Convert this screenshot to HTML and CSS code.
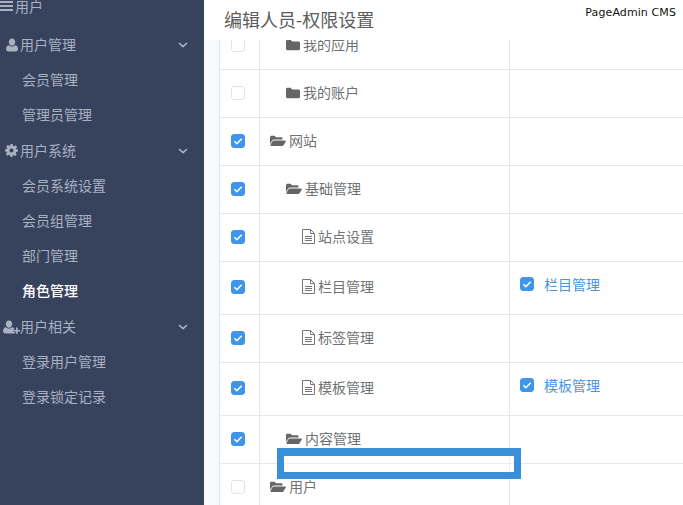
FILE: index.html
```html
<!DOCTYPE html>
<html lang="zh-CN">
<head>
<meta charset="utf-8">
<title>编辑人员-权限设置</title>
<link rel="stylesheet" href="styles.css">
</head>
<body>
<svg class="sprite" aria-hidden="true">
  <symbol id="i-folder" viewBox="0 0 14 12"><path d="M1.4 .8h3.4l1.3 1.6h6.5c.8 0 1.4.6 1.4 1.4v6c0 .8-.6 1.4-1.4 1.4H1.4C.6 11.2 0 10.6 0 9.8V2.2C0 1.4.6.8 1.4.8z"/></symbol>
  <symbol id="i-open" viewBox="0 0 16 12"><path d="M0 9V2.2C0 1.4.6.8 1.4.8h3.2l1.3 1.5h5.3c.8 0 1.3.5 1.3 1.3v.9H4.2c-.9 0-1.6.4-2.1 1.1z"/><path d="M3.5 5.4H15c.8 0 1.2.6.8 1.2l-2.3 3.6c-.4.6-1 .9-1.7.9H1.2C.4 11.1 0 10.5.4 9.9l2-3.6c.3-.6.6-.9 1.1-.9z"/></symbol>
  <symbol id="i-file" viewBox="0 0 13 15"><path class="ln" d="M.5.5h8l4 4v10H.5zM8.500.5v4h4M3 7.500h7M3 9.500h7M3 11.500h7"/></symbol>
  <symbol id="i-check" viewBox="0 0 14 14"><path class="ck" d="M3.4 7.2l2.5 2.5 4.8-5"/></symbol>
  <symbol id="i-user" viewBox="0 0 12 14"><path d="M6 .5c1.9 0 3.2 1.5 3.2 3.500S7.900 7.700 6 7.700 2.800 6 2.800 4 4.100.5 6 .5zM2.800 7.200C3.700 8.100 4.800 8.600 6 8.600s2.300-.5 3.200-1.400c1.700.2 2.800 1.600 2.800 3.900 0 1.600-1 2.400-2.300 2.400H2.300C1 13.500 0 12.700 0 11.100c0-2.300 1.100-3.700 2.800-3.900z"/></symbol>
  <symbol id="i-plus" viewBox="0 0 17 14"><path d="M6 .5c1.900 0 3.200 1.500 3.200 3.500S7.900 7.700 6 7.700 2.800 6 2.800 4 4.100.5 6 .5zM2.800 7.200C3.700 8.100 4.800 8.600 6 8.600s2.300-.5 3.200-1.400c1.300.2 2.200 1 2.600 2.300H10.500v2.400h1.600v1.600H2.300C1 13.500 0 12.700 0 11.100c0-2.300 1.100-3.700 2.800-3.900z"/><path d="M13 7.500h1.700v2.500H17v1.600h-2.300v2.200H13v-2.200h-2.300V10H13z"/></symbol>
  <symbol id="i-gear" viewBox="0 0 14 14"><path fill-rule="evenodd" d="M5.800 0h2.400l.4 1.900 1.100.5 1.700-1 1.600 1.600-1 1.700.5 1.100L14 5.800v2.400l-1.900.4-.5 1.100 1 1.700-1.600 1.600-1.700-1-1.100.5L8.200 14H5.800l-.4-1.900-1.100-.5-1.700 1L1 11l1-1.700-.5-1.100L0 8.200V5.800l1.900-.4.500-1.100-1-1.700L3 1l1.700 1 1.100-.5zM7 4.800a2.200 2.200 0 1 0 0 4.400 2.200 2.200 0 0 0 0-4.400z"/></symbol>
  <symbol id="i-bars" viewBox="0 0 13 12"><path d="M0 1h13v2H0zM0 5h13v2H0zM0 9h13v2H0z"/></symbol>
  <symbol id="i-chev" viewBox="0 0 10 6"><path class="chev" d="M1 1l4 3.600L9 1"/></symbol>
</svg>
<div class="app">
  <aside class="sidebar">
    <div class="side-title"><svg class="ic-bars"><use href="#i-bars"/></svg>用户</div>
    <nav class="menu">
      <div class="group"><svg class="ic-user"><use href="#i-user"/></svg><span class="group-name">用户管理</span><svg class="ic-chev"><use href="#i-chev"/></svg></div>
      <a class="item">会员管理</a>
      <a class="item">管理员管理</a>
      <div class="group"><svg class="ic-gear"><use href="#i-gear"/></svg><span class="group-name">用户系统</span><svg class="ic-chev"><use href="#i-chev"/></svg></div>
      <a class="item">会员系统设置</a>
      <a class="item">会员组管理</a>
      <a class="item">部门管理</a>
      <a class="item active">角色管理</a>
      <div class="group"><svg class="ic-plus"><use href="#i-plus"/></svg><span class="group-name">用户相关</span><svg class="ic-chev"><use href="#i-chev"/></svg></div>
      <a class="item">登录用户管理</a>
      <a class="item">登录锁定记录</a>
    </nav>
  </aside>
  <main class="main">
    <header class="topbar">
      <h1 class="page-title">编辑人员-权限设置</h1>
      <span class="brand">PageAdmin CMS</span>
    </header>
    <div class="scroller">
      <table class="perm">
        <colgroup><col class="c1"><col class="c2"><col></colgroup>
        <tr class="first"><td><span class="box"></span></td><td class="l1"><svg class="ic-folder"><use href="#i-folder"/></svg>我的应用</td><td></td></tr>
        <tr><td><span class="box"></span></td><td class="l1"><svg class="ic-folder"><use href="#i-folder"/></svg>我的账户</td><td></td></tr>
        <tr><td><span class="box on"><svg><use href="#i-check"/></svg></span></td><td class="l0"><svg class="ic-open"><use href="#i-open"/></svg>网站</td><td></td></tr>
        <tr><td><span class="box on"><svg><use href="#i-check"/></svg></span></td><td class="l1"><svg class="ic-open"><use href="#i-open"/></svg>基础管理</td><td></td></tr>
        <tr><td><span class="box on"><svg><use href="#i-check"/></svg></span></td><td class="l2"><svg class="ic-file"><use href="#i-file"/></svg>站点设置</td><td></td></tr>
        <tr class="tall"><td><span class="box on"><svg><use href="#i-check"/></svg></span></td><td class="l2"><svg class="ic-file"><use href="#i-file"/></svg>栏目管理</td><td class="act"><span class="box on"><svg><use href="#i-check"/></svg></span><a class="link">栏目管理</a></td></tr>
        <tr><td><span class="box on"><svg><use href="#i-check"/></svg></span></td><td class="l2"><svg class="ic-file"><use href="#i-file"/></svg>标签管理</td><td></td></tr>
        <tr class="tall"><td><span class="box on"><svg><use href="#i-check"/></svg></span></td><td class="l2"><svg class="ic-file"><use href="#i-file"/></svg>模板管理</td><td class="act"><span class="box on"><svg><use href="#i-check"/></svg></span><a class="link">模板管理</a></td></tr>
        <tr><td><span class="box on"><svg><use href="#i-check"/></svg></span></td><td class="l1"><svg class="ic-open"><use href="#i-open"/></svg>内容管理</td><td></td></tr>
        <tr><td><span class="box"></span></td><td class="l0"><svg class="ic-open"><use href="#i-open"/></svg>用户</td><td></td></tr>
      </table>
      <div class="highlight"></div>
    </div>
  </main>
</div>
</body>
</html>
```

FILE: styles.css
```css
* { box-sizing: border-box; }
html, body { margin: 0; height: 100%; overflow: hidden; }
body {
  font-family: "Noto Sans CJK SC", "Liberation Sans", sans-serif;
  font-size: 14px;
  background: #fff;
  color: #676a6c;
}
.sprite { display: none; }
.app { display: flex; height: 505px; }

.sidebar {
  width: 204px;
  flex: none;
  background: #37435d;
  color: #a7b1c2;
}
.side-title {
  height: 12px;
  line-height: 12px;
  display: flex;
  align-items: center;
  margin-bottom: 15px;
  color: #a7b1c2;
}
.side-title svg { fill: currentColor; }
.ic-bars { width: 13px; height: 12px; margin: 0 2px 0 0; flex: none; }
.menu { display: flex; flex-direction: column; }
.group, .item { height: 35.2px; line-height: 35px; }
.group { display: flex; align-items: center; position: relative; padding-left: 20px; }
.group svg { fill: currentColor; flex: none; position: absolute; }
.ic-user { width: 12px; height: 14px; left: 6px; top: 11px; }
.ic-gear { width: 13px; height: 13px; left: 5px; top: 11px; }
.ic-plus { width: 17px; height: 14px; left: 3px; top: 11px; }
.group .ic-chev { width: 10px; height: 6px; left: 178px; top: 15px; fill: none; }
.chev { fill: none; stroke: #a7b1c2; stroke-width: 1.6; }
.item { display: block; padding-left: 22px; }
.item.active { color: #fff; font-weight: 500; }

.main { flex: 1; min-width: 0; display: flex; flex-direction: column; background: #f7fafd; }
.topbar {
  height: 40px;
  flex: none;
  display: flex;
  justify-content: space-between;
  align-items: flex-start;
  background: #fff;
  padding: 0 7px 0 20px;
}
.page-title { margin: 7px 0 0; font-size: 18px; font-weight: 400; line-height: 24px; color: #5c5c5c; }
.brand { font-family: "DejaVu Sans", sans-serif; font-size: 11px; letter-spacing: .1px; line-height: 14px; margin-top: 6px; color: #111; }

.scroller { flex: 1; overflow: hidden; position: relative; padding-left: 15px; }
.perm {
  margin-top: -19px;
  border-collapse: collapse;
  table-layout: fixed;
  background: #fff;
  width: calc(100% + 2px);
}
.c1 { width: 40px; }
.c2 { width: 250px; }
.perm td {
  height: 48px;
  padding: 0 10px 4px;
  border: 1px solid #e7e7e7;
  vertical-align: middle;
  color: #6f7274;
}
.perm tr.tall td { height: 53px; }
.perm td:last-child { border-right: 0; }
.perm td.l0 { padding-left: 10px; }
.perm td.l1 { padding-left: 26px; }
.perm td.l2 { padding-left: 42px; }
.perm td.act { padding-bottom: 7px; }
.perm svg { vertical-align: -1px; fill: #666; }
.ic-folder { width: 14px; height: 12px; margin-right: 3px; }
.ic-open { width: 16px; height: 12px; margin-right: 3px; }
.ic-file { width: 13px; height: 15px; margin-right: 3px; vertical-align: -2px !important; fill: none !important; }
.ln { fill: none; stroke: #777; stroke-width: 1; }

.box {
  display: inline-block;
  width: 14px;
  height: 14px;
  border: 1px solid #e3e3e3;
  border-radius: 3px;
  background: #fff;
  vertical-align: middle;
  margin: 0 0 2px 1px;
}
.box.on { background: #3f95e8; border-color: #3f95e8; position: relative; }
.box.on svg { position: absolute; left: -1px; top: -1px; width: 14px; height: 14px; display: block; fill: none; }
.ck { fill: none; stroke: #fff; stroke-width: 1.6; }
.act .box { margin: 0 10px 4px 0; }
.link { color: #4a94e0; }

.highlight {
  position: absolute;
  left: 73px;
  top: 408px;
  width: 244px;
  height: 31px;
  border-style: solid;
  border-color: #3a8fd9;
  border-width: 8px 7px 7px 7px;
  background: rgba(255,255,255,.3);
}
```
